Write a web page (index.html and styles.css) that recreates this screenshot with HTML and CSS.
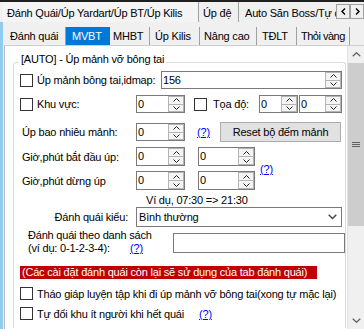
FILE: index.html
```html
<!DOCTYPE html>
<html>
<head>
<meta charset="utf-8">
<link rel="stylesheet" href="styles.css">
</head>
<body>
<div class="topline"></div>
<div class="otabs">
  <div class="otab t1">Đánh Quái/Úp Yardart/Úp BT/Úp Kilis</div>
  <div class="otab t2">Úp đệ</div>
  <div class="otab t3">Auto Săn Boss/Tự động</div>
  <div class="oscroll">
    <div class="ob"><svg width="5" height="7" viewBox="0 0 5 7"><polyline points="4,0.5 1,3.5 4,6.5" fill="none" stroke="#000" stroke-width="1.4"/></svg></div>
    <div class="ob"><svg width="5" height="7" viewBox="0 0 5 7"><polyline points="1,0.5 4,3.5 1,6.5" fill="none" stroke="#000" stroke-width="1.4"/></svg></div>
  </div>
</div>
<div class="outer">
  <div class="edge"></div>
  <div class="opanel">
    <div class="itabs">
      <div class="itab i1">Đánh quái</div>
      <div class="itab i2 sel">MVBT</div>
      <div class="itab i3">MHBT</div>
      <div class="itab i4">Úp Kilis</div>
      <div class="itab i5">Nâng cao</div>
      <div class="itab i6">TĐLT</div>
      <div class="itab i7">Thỏi vàng</div>
    </div>
    <div class="ipanel">
      <div class="content">
        <div class="group">
          <div class="gcap"><span>[AUTO] - Úp mảnh vỡ bông tai</span></div>

          <div class="row r1">
            <span class="cb"></span>
            <span class="lbl w-r1">Úp mảnh bông tai,idmap:</span>
            <div class="num n-wide"><span class="val">156</span><span class="spin"><span><svg width="7" height="4" viewBox="0 0 7 4"><polyline points="0.5,3.5 3.5,0.5 6.5,3.5" fill="none" stroke="#222" stroke-width="1"/></svg></span><span><svg width="7" height="4" viewBox="0 0 7 4"><polyline points="0.5,0.5 3.5,3.5 6.5,0.5" fill="none" stroke="#222" stroke-width="1"/></svg></span></span></div>
          </div>

          <div class="row r2">
            <span class="cb"></span>
            <span class="lbl w-khu">Khu vực:</span>
            <div class="num n-49"><span class="val">0</span><span class="spin"><span><svg width="7" height="4" viewBox="0 0 7 4"><polyline points="0.5,3.5 3.5,0.5 6.5,3.5" fill="none" stroke="#222" stroke-width="1"/></svg></span><span><svg width="7" height="4" viewBox="0 0 7 4"><polyline points="0.5,0.5 3.5,3.5 6.5,0.5" fill="none" stroke="#222" stroke-width="1"/></svg></span></span></div>
            <span class="cb cb2"></span>
            <span class="lbl w-toa">Tọa độ:</span>
            <div class="num n-39"><span class="val">0</span><span class="spin"><span><svg width="7" height="4" viewBox="0 0 7 4"><polyline points="0.5,3.5 3.5,0.5 6.5,3.5" fill="none" stroke="#222" stroke-width="1"/></svg></span><span><svg width="7" height="4" viewBox="0 0 7 4"><polyline points="0.5,0.5 3.5,3.5 6.5,0.5" fill="none" stroke="#222" stroke-width="1"/></svg></span></span></div>
            <div class="num n-43"><span class="val">0</span><span class="spin"><span><svg width="7" height="4" viewBox="0 0 7 4"><polyline points="0.5,3.5 3.5,0.5 6.5,3.5" fill="none" stroke="#222" stroke-width="1"/></svg></span><span><svg width="7" height="4" viewBox="0 0 7 4"><polyline points="0.5,0.5 3.5,3.5 6.5,0.5" fill="none" stroke="#222" stroke-width="1"/></svg></span></span></div>
          </div>

          <div class="row r3">
            <span class="lbl w-lab">Úp bao nhiêu mảnh:</span>
            <div class="num n-49"><span class="val">0</span><span class="spin"><span><svg width="7" height="4" viewBox="0 0 7 4"><polyline points="0.5,3.5 3.5,0.5 6.5,3.5" fill="none" stroke="#222" stroke-width="1"/></svg></span><span><svg width="7" height="4" viewBox="0 0 7 4"><polyline points="0.5,0.5 3.5,3.5 6.5,0.5" fill="none" stroke="#222" stroke-width="1"/></svg></span></span></div>
            <a class="help h-r3">(?)</a>
            <div class="btn">Reset bộ đếm mảnh</div>
          </div>

          <div class="tgrid">
            <span class="lbl">Giờ,phút bắt đầu úp:</span>
            <div class="num t-a"><span class="val">0</span><span class="spin"><span><svg width="7" height="4" viewBox="0 0 7 4"><polyline points="0.5,3.5 3.5,0.5 6.5,3.5" fill="none" stroke="#222" stroke-width="1"/></svg></span><span><svg width="7" height="4" viewBox="0 0 7 4"><polyline points="0.5,0.5 3.5,3.5 6.5,0.5" fill="none" stroke="#222" stroke-width="1"/></svg></span></span></div>
            <div class="num t-b"><span class="val">0</span><span class="spin"><span><svg width="7" height="4" viewBox="0 0 7 4"><polyline points="0.5,3.5 3.5,0.5 6.5,3.5" fill="none" stroke="#222" stroke-width="1"/></svg></span><span><svg width="7" height="4" viewBox="0 0 7 4"><polyline points="0.5,0.5 3.5,3.5 6.5,0.5" fill="none" stroke="#222" stroke-width="1"/></svg></span></span></div>
            <a class="help h-time">(?)</a>
            <span class="lbl">Giờ,phút dừng úp</span>
            <div class="num t-a"><span class="val">0</span><span class="spin"><span><svg width="7" height="4" viewBox="0 0 7 4"><polyline points="0.5,3.5 3.5,0.5 6.5,3.5" fill="none" stroke="#222" stroke-width="1"/></svg></span><span><svg width="7" height="4" viewBox="0 0 7 4"><polyline points="0.5,0.5 3.5,3.5 6.5,0.5" fill="none" stroke="#222" stroke-width="1"/></svg></span></span></div>
            <div class="num t-b"><span class="val">0</span><span class="spin"><span><svg width="7" height="4" viewBox="0 0 7 4"><polyline points="0.5,3.5 3.5,0.5 6.5,3.5" fill="none" stroke="#222" stroke-width="1"/></svg></span><span><svg width="7" height="4" viewBox="0 0 7 4"><polyline points="0.5,0.5 3.5,3.5 6.5,0.5" fill="none" stroke="#222" stroke-width="1"/></svg></span></span></div>
          </div>

          <div class="example">Ví dụ, 07:30 =&gt; 21:30</div>

          <div class="row rcombo">
            <span class="lbl w-kieu">Đánh quái kiểu:</span>
            <div class="combo"><span>Bình thường</span><svg width="9" height="6" viewBox="0 0 9 6"><polyline points="0.7,0.7 4.5,4.5 8.3,0.7" fill="none" stroke="#444" stroke-width="1.4"/></svg></div>
          </div>

          <div class="row rlist">
            <div class="lbl2">
              <div>Đánh quái theo danh sách</div>
              <div class="l2"><span class="l2a">(ví dụ: 0-1-2-3-4):</span><a class="help">(?)</a></div>
            </div>
            <div class="tbox"></div>
          </div>

          <div class="redbar">(Các cài đặt đánh quái còn lại sẽ sử dụng của tab đánh quái)</div>

          <div class="row rc1">
            <span class="cb"></span>
            <span class="lbl">Tháo giáp luyện tập khi đi úp mảnh vỡ bông tai(xong tự mặc lại)</span>
          </div>
          <div class="row rc2">
            <span class="cb"></span>
            <span class="lbl w-tudoi">Tự đổi khu ít người khi hết quái</span>
            <a class="help">(?)</a>
          </div>
        </div>
      </div>
      <div class="vscroll">
        <div class="sbtn"><svg width="9" height="5" viewBox="0 0 9 5"><polyline points="0.7,4.3 4.5,0.7 8.3,4.3" fill="none" stroke="#606060" stroke-width="1.2"/></svg></div>
        <div class="thumb"><span class="grip"></span></div>
        <div class="track"></div>
        <div class="sbtn"><svg width="9" height="5" viewBox="0 0 9 5"><polyline points="0.7,0.7 4.5,4.3 8.3,0.7" fill="none" stroke="#606060" stroke-width="1.2"/></svg></div>
      </div>
    </div>
  </div>
</div>
</body>
</html>
```
FILE: styles.css
```css
* { box-sizing: border-box; }
html, body { margin: 0; padding: 0; }
body {
  width: 364px; height: 329px; overflow: hidden;
  background: #f0f0f0;
  font: 11px "Liberation Sans", Arial, sans-serif;
  letter-spacing: -0.2px;
  color: #000;
}
.topline { height: 2px; background: #1f1f1f; }

/* outer tabs */
.otabs { display: flex; height: 20px; }
.otab {
  height: 20px; padding-top: 4px; line-height: 14px;
  white-space: nowrap; overflow: hidden;
  border-right: 1px solid #a0a0a0;
}
.otab.t1 { margin-left: 2px; width: 197px; padding-left: 5px; background: #f4f4f4; }
.otab.t2 { width: 40px; padding-left: 4px; }
.otab.t3 { width: 97px; padding-left: 6px; border-right: none; }
.oscroll { display: flex; margin-top: 2px; }
.ob {
  width: 14px; height: 15px; border: 1px solid #a0a0a0; background: #f0f0f0;
  display: flex; align-items: center; justify-content: center;
}

/* outer panel */
.outer { display: flex; height: 307px; }
.edge { width: 3px; background: #8fcdf0; }
.opanel { flex: 1; display: flex; flex-direction: column; }
.itabs { display: flex; height: 18px; margin-top: 5px; margin-left: 2px; }
.itab {
  height: 18px; line-height: 18px; white-space: nowrap;
  border-right: 1px solid #a0a0a0;
}
.itab.sel { background: #0078d7; color: #fff; border-right-color: #0078d7; }
.i1 { width: 61px; padding-left: 5px; }
.i2 { width: 44px; padding-left: 6px; }
.i3 { width: 40px; padding-left: 3px; }
.i4 { width: 50px; padding-left: 5px; }
.i5 { width: 57px; padding-left: 4px; }
.i6 { width: 40px; padding-left: 5px; }
.i7 { width: 53px; padding-left: 4px; letter-spacing: -0.5px; }

.ipanel {
  flex: 1; display: flex; margin-left: 1px;
  border-top: 1px solid #cfcfcf; border-left: 1px solid #b8b8b8;
  background: #fff;
}
.content { flex: 1; overflow: hidden; }
.vscroll {
  width: 17px; display: flex; flex-direction: column;
  background: #f0f0f0; border-left: 1px solid #e2e2e2;
}
.sbtn { height: 17px; display: flex; align-items: center; justify-content: center; }
.thumb {
  height: 163px; background: #cdcdcd;
  display: flex; align-items: center; justify-content: center;
}
.grip {
  width: 8px; height: 5px;
  border-top: 1px solid #606060; border-bottom: 1px solid #606060;
  background: linear-gradient(#cdcdcd 1px, #606060 1px, #606060 2px, #cdcdcd 2px);
}
.track { flex: 1; }

/* group box */
.group {
  margin: 16px 0 0 8px; width: 333px; height: 266px;
  border: 1px solid #dcdcdc; border-bottom: none; border-radius: 3px 3px 0 0;
}
.gcap { height: 14px; line-height: 14px; margin-top: -11px; padding-left: 5px; }
.gcap span { background: #fff; padding: 0 2px; }

.row { display: flex; align-items: center; }
.lbl { white-space: nowrap; }
.cb {
  width: 13px; height: 13px; border: 1px solid #333; background: #fff;
  flex: none; margin-left: 6px;
}
.r1 { margin-top: 5px; height: 18px; }
.w-r1 { margin-left: 4px; width: 124px; }
.r2 { margin-top: 6px; height: 18px; }
.w-khu { margin-left: 4px; width: 99px; }
.cb.cb2 { margin-left: 9px; }
.w-toa { margin-left: 6px; width: 46px; }

.num {
  display: flex; height: 18px; border: 1px solid #7a7a7a; background: #fff; flex: none;
}
.num .val { flex: 1; padding-left: 1px; line-height: 16px; }
.spin { width: 16px; display: flex; flex-direction: column; }
.spin span {
  flex: 1; display: flex; align-items: center; justify-content: center;
  border: 1px solid #b4b4b4; background: #f4f4f4;
}
.spin span + span { border-top: none; }
.n-wide { width: 181px; }
.n-49 { width: 49px; }
.n-39 { width: 39px; }
.n-43 { width: 43px; margin-left: 1px; }

.r3 { margin-top: 9px; height: 20px; }
.w-lab { margin-left: 8px; width: 114px; }
.help { color: #0000ff; text-decoration: underline; white-space: nowrap; }
.h-r3 { margin-left: 12px; width: 23px; }
.btn {
  width: 121px; height: 20px; line-height: 18px; text-align: center;
  background: #e1e1e1; border: 1px solid #adadad;
}

.tgrid {
  margin-top: 5px;
  display: grid;
  grid-template-columns: 114px 49px 70px auto;
  grid-template-rows: 19px 19px;
  row-gap: 5px;
  padding-left: 8px;
  align-items: center;
}
.tgrid .num { height: 19px; }
.tgrid .num .val { line-height: 17px; }
.t-a { width: 49px; }
.t-b { width: 57px; margin-left: 13px; }
.h-time { grid-column: 4; grid-row: 1 / span 2; margin-left: 5px; }

.example { margin-top: 4px; height: 12px; line-height: 12px; padding-left: 132px; }

.rcombo { margin-top: 1px; height: 20px; }
.w-kieu { width: 122px; text-align: right; padding-right: 8px; }
.combo {
  width: 206px; height: 20px; border: 1px solid #7a7a7a; background: #fff;
  display: flex; align-items: center; justify-content: space-between;
  padding: 0 4px 0 2px;
}

.rlist { margin-top: 2px; height: 26px; align-items: flex-start; }
.lbl2 { width: 150px; margin-left: 14px; line-height: 13px; }
.l2 { display: flex; }
.l2a { width: 102px; }
.tbox { width: 178px; height: 20px; margin-top: 4px; border: 1px solid #7a7a7a; background: #fff; }

.redbar {
  margin: 11px 0 0 6px; width: 297px; height: 13px; line-height: 13px;
  background: #c00000; color: #fff; padding-left: 2px; white-space: nowrap; overflow: hidden;
}

.rc1 { margin-top: 8px; height: 13px; }
.rc2 { margin-top: 7px; height: 13px; }
.rc1 .lbl, .rc2 .lbl { margin-left: 4px; }
.w-tudoi { width: 162px; }
```
